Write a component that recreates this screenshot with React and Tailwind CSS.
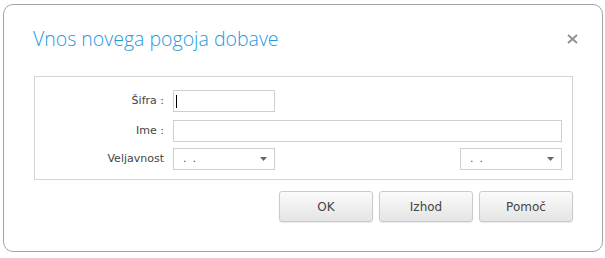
import React from "react";

// Vnos novega pogoja dobave - dialog
const labelCls = "w-[130px] shrink-0 text-right pr-[1px] text-[11px] text-[#444]";

const DateSelect = () => (
  <div className="relative w-[102px] h-[22px] border border-[#cfcfcf] bg-white">
    <span className="absolute left-[9px] top-[4px] text-[11px] leading-[12px] text-[#555] tracking-[6px]">..</span>
    <svg className="absolute right-[7px] top-[8px]" width="7" height="4" viewBox="0 0 7 4">
      <path d="M0 0 L7 0 L3.5 4 Z" fill="#666" />
    </svg>
  </div>
);

const Button = ({ children }) => (
  <button className="w-[94px] h-[31px] rounded-[3px] border border-[#cacaca] bg-gradient-to-b from-[#fbfbfb] to-[#e4e4e4] text-[12px] text-[#444] shadow-[0_1px_1px_rgba(0,0,0,0.08)]">
    {children}
  </button>
);

export default function App() {
  return (
    <div className="w-[605px] h-[258px] bg-white pt-[4px] pl-[3px]" style={{ fontFamily: '"DejaVu Sans", Verdana, sans-serif' }}>
      <div className="w-[600px] h-[248px] border border-[#a3a3a3] rounded-[10px] bg-white">
        {/* Header */}
        <div className="flex items-start justify-between h-[71px] pl-[29px] pr-[24px] pt-[21px]">
          <h1
            className="text-[19.5px] leading-[25px] text-[#1e9ae0] font-light"
            style={{ fontFamily: '"Open Sans", "Noto Sans", sans-serif' }}
          >
            Vnos novega pogoja dobave
          </h1>
          <svg className="mt-[8px]" width="11" height="10" viewBox="0 0 11 10">
            <path d="M1 1 L10 9 M10 1 L1 9" stroke="#8f8f8f" strokeWidth="1.8" />
          </svg>
        </div>

        {/* Fields */}
        <div className="ml-[30px] w-[539px] h-[104px] border border-[#d4d4d4] pt-[13px] pr-[10px] flex flex-col">
          <div className="flex items-center h-[22px]">
            <label className={labelCls}>Šifra :</label>
            <div className="ml-[8px] relative w-[102px] h-[22px] border border-[#cfcfcf] bg-white">
              <span className="absolute left-[2px] top-[4px] w-[1px] h-[13px] bg-black" />
            </div>
          </div>
          <div className="flex items-center h-[22px] mt-[8px]">
            <label className={labelCls}>Ime :</label>
            <div className="ml-[8px] flex-1 h-[22px] border border-[#cfcfcf] bg-white" />
          </div>
          <div className="flex items-center h-[22px] mt-[6px]">
            <label className={labelCls}>Veljavnost</label>
            <div className="ml-[8px] flex-1 flex justify-between">
              <DateSelect />
              <DateSelect />
            </div>
          </div>
        </div>

        {/* Buttons */}
        <div className="flex justify-end gap-[6px] w-[569px] mt-[11px]">
          <Button>OK</Button>
          <Button>Izhod</Button>
          <Button>Pomoč</Button>
        </div>
      </div>
    </div>
  );
}
